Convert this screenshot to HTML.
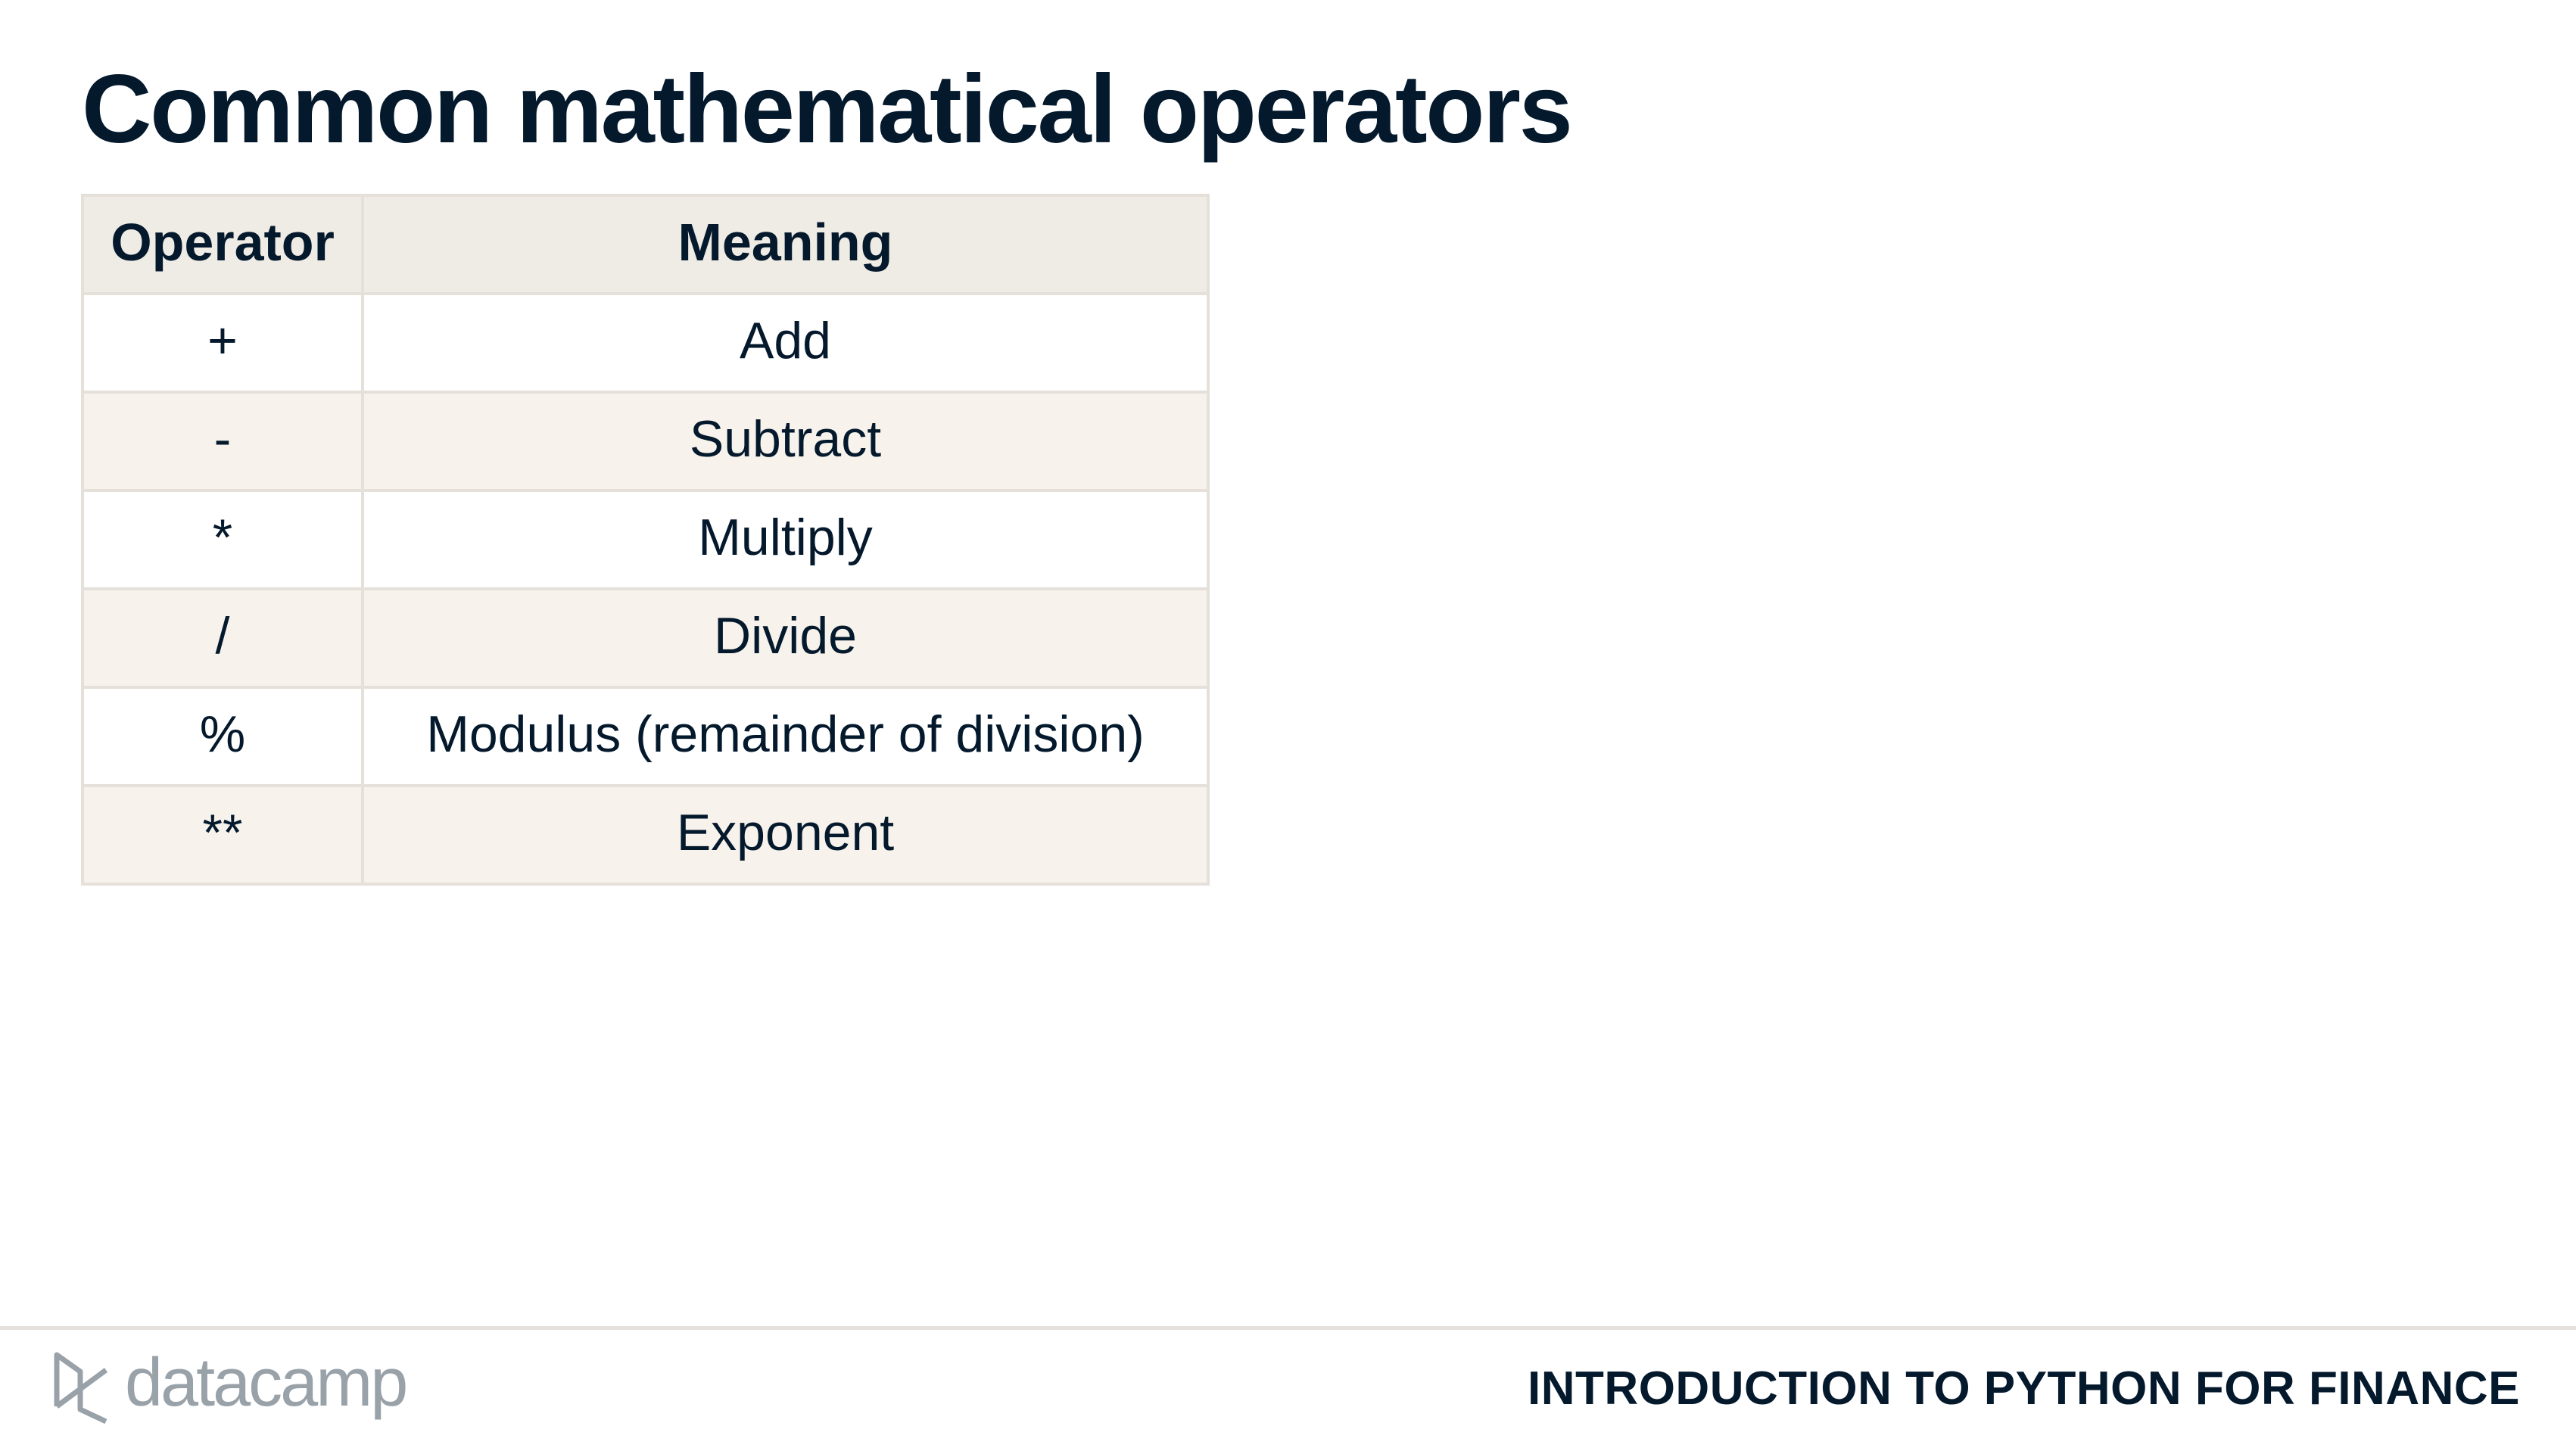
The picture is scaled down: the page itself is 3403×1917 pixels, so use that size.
<!DOCTYPE html>
<html><head><meta charset="utf-8"><style>
html,body{margin:0;padding:0;}
body{width:3403px;height:1917px;position:relative;background:#fff;font-family:"Liberation Sans",sans-serif;color:#05192d;overflow:hidden;}
h1{position:absolute;left:108px;top:70px;margin:0;font-size:128px;font-weight:bold;letter-spacing:-2.3px;white-space:nowrap;line-height:150px;}
table{position:absolute;left:107px;top:256px;border-collapse:collapse;}
td,th{border:4px solid #e5e0d9;height:120px;padding:0 0 6px 0;text-align:center;font-size:68px;white-space:nowrap;}
th{background:#efebe5;font-weight:bold;font-size:70px;}
td.c1,th.c1{width:366px;}
td.c2,th.c2{width:1113px;}
tr.alt td{background:#f7f3ec;}
.line{position:absolute;left:0;top:1752px;width:3403px;height:5px;background:#e5e0da;}
.foot{position:absolute;right:74px;top:1800px;font-size:62px;font-weight:bold;letter-spacing:0.5px;white-space:nowrap;line-height:70px;}
.logo{position:absolute;left:165px;top:1782px;font-size:90px;color:#9aa2a9;letter-spacing:-3px;line-height:90px;}
</style></head><body>
<h1>Common mathematical operators</h1>
<table>
<tr><th class="c1">Operator</th><th class="c2">Meaning</th></tr>
<tr><td class="c1">+</td><td class="c2">Add</td></tr>
<tr class="alt"><td class="c1">-</td><td class="c2">Subtract</td></tr>
<tr><td class="c1">*</td><td class="c2">Multiply</td></tr>
<tr class="alt"><td class="c1">/</td><td class="c2">Divide</td></tr>
<tr><td class="c1">%</td><td class="c2">Modulus (remainder of division)</td></tr>
<tr class="alt"><td class="c1">**</td><td class="c2">Exponent</td></tr>
</table>
<div class="line"></div>
<svg style="position:absolute;left:0;top:0" width="160" height="1917" viewBox="0 0 160 1917">
<g fill="none" stroke="#9aa2a9" stroke-width="7" stroke-linejoin="round">
<path d="M75 1858 L75 1790 L106 1812 L106 1862 L140 1878"/>
<path d="M75 1858 L140 1810"/>
</g></svg>
<div class="logo">datacamp</div>
<div class="foot">INTRODUCTION TO PYTHON FOR FINANCE</div>
</body></html>
